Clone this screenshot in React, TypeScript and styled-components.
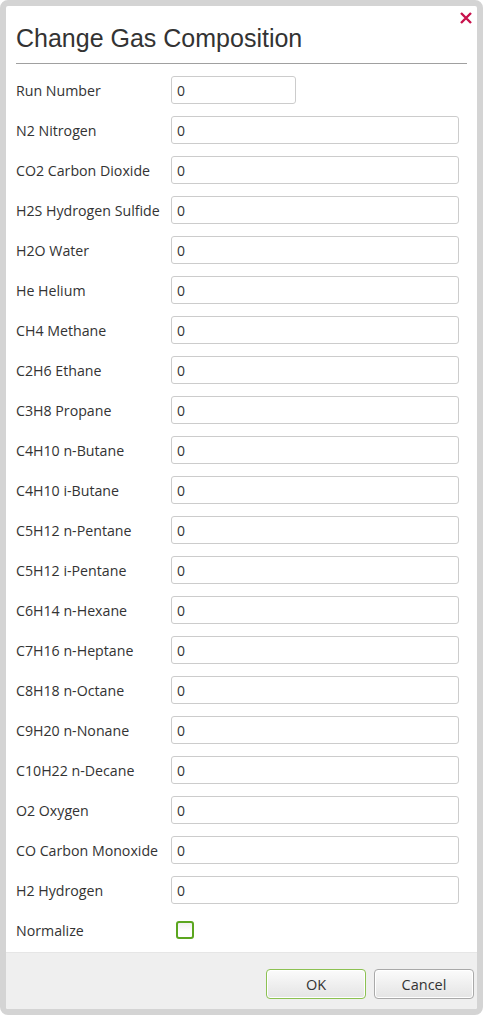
import React from "react";
import styled, { createGlobalStyle } from "styled-components";

const GlobalStyle = createGlobalStyle`
  html, body { margin: 0; padding: 0; background: #ffffff; }
  body { font-family: "Open Sans", "Noto Sans", sans-serif; }
  * { box-sizing: border-box; }
`;

const Dialog = styled.div`
  position: relative;
  height: 1015px;
  width: 483px;
  border: 6px solid #d4d4d4;
  border-radius: 8px;
  background: #ffffff;
  display: flex;
  flex-direction: column;
  overflow: hidden;
`;

const Header = styled.div`
  margin: 0 10px;
  padding: 17px 0 10px;
  border-bottom: 1px solid #a0a0a0;
`;

const Title = styled.h1`
  margin: 0;
  font-family: "Liberation Sans", Arial, sans-serif;
  font-weight: normal;
  font-size: 25px;
  line-height: 30px;
  color: #333333;
`;

const CloseButton = styled.button`
  position: absolute;
  top: 6px;
  right: 5px;
  width: 12px;
  height: 12px;
  padding: 0;
  border: none;
  background: transparent;
  cursor: pointer;
  display: flex;
`;

const Form = styled.div`
  padding: 12px 18px 8px 10px;
  display: flex;
  flex-direction: column;
  gap: 12px;
`;

const Row = styled.div`
  display: grid;
  grid-template-columns: 155px 1fr;
  align-items: center;
  height: 28px;
`;

const Label = styled.label`
  font-size: 14.2px;
  color: #333333;
  white-space: nowrap;
  padding-top: 1px;
`;

const Input = styled.input<{ $short?: boolean }>`
  width: ${(p) => (p.$short ? "125px" : "100%")};
  height: 28px;
  border: 1px solid #cccccc;
  border-radius: 3px;
  padding: 0 5px;
  font-family: "Open Sans", "Noto Sans", sans-serif;
  font-size: 14px;
  color: #333333;
  background: #ffffff;
  outline: none;
`;

const Checkbox = styled.span`
  margin-left: 5px;
  width: 18px;
  height: 18px;
  border: 2px solid #5ba61f;
  border-radius: 3px;
  background: linear-gradient(#f0f0f0, #ffffff 60%);
`;

const Footer = styled.div`
  flex: 1;
  background: #efefef;
  border-top: 1px solid #e6e6e6;
  padding: 16px 3px 0 0;
  display: flex;
  justify-content: flex-end;
  align-items: flex-start;
  gap: 8px;
`;

const Button = styled.button<{ $primary?: boolean }>`
  width: 100px;
  height: 30px;
  border: 1px solid ${(p) => (p.$primary ? "#8cc152" : "#a9a9a9")};
  border-radius: 4px;
  background: linear-gradient(#fbfbfb, #e4e4e4);
  box-shadow: inset 0 0 0 1px #ffffff;
  font-family: "Open Sans", "Noto Sans", sans-serif;
  font-size: 14.5px;
  color: #333333;
  padding: 0;
`;

const gases = [
  "N2 Nitrogen",
  "CO2 Carbon Dioxide",
  "H2S Hydrogen Sulfide",
  "H2O Water",
  "He Helium",
  "CH4 Methane",
  "C2H6 Ethane",
  "C3H8 Propane",
  "C4H10 n-Butane",
  "C4H10 i-Butane",
  "C5H12 n-Pentane",
  "C5H12 i-Pentane",
  "C6H14 n-Hexane",
  "C7H16 n-Heptane",
  "C8H18 n-Octane",
  "C9H20 n-Nonane",
  "C10H22 n-Decane",
  "O2 Oxygen",
  "CO Carbon Monoxide",
  "H2 Hydrogen",
];

export default function App() {
  return (
    <>
      <GlobalStyle />
      <Dialog>
        <CloseButton aria-label="Close">
          <svg width="12" height="12" viewBox="0 0 12 12">
            <path d="M1 1 L11 11 M11 1 L1 11" stroke="#c8124c" strokeWidth="2.4" strokeLinecap="butt" />
          </svg>
        </CloseButton>
        <Header>
          <Title>Change Gas Composition</Title>
        </Header>
        <Form>
          <Row>
            <Label>Run Number</Label>
            <Input $short defaultValue="0" />
          </Row>
          {gases.map((g) => (
            <Row key={g}>
              <Label>{g}</Label>
              <Input defaultValue="0" />
            </Row>
          ))}
          <Row>
            <Label>Normalize</Label>
            <Checkbox />
          </Row>
        </Form>
        <Footer>
          <Button $primary>OK</Button>
          <Button>Cancel</Button>
        </Footer>
      </Dialog>
    </>
  );
}
